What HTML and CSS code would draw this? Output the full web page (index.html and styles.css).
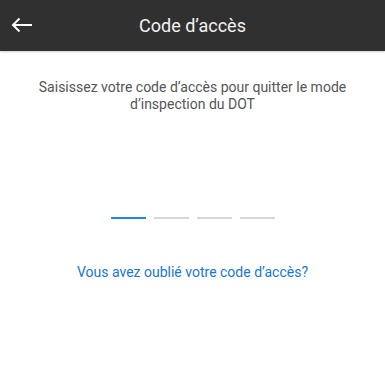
FILE: index.html
```html
<!DOCTYPE html>
<html lang="fr">
<head>
  <meta charset="UTF-8" />
  <meta name="viewport" content="width=device-width, initial-scale=1.0" />
  <title>Code d'accès</title>
  <link rel="stylesheet" href="styles.css">
</head>
<body>
  <header class="toolbar">
    <button class="back-btn" aria-label="Retour">
      <svg width="22" height="16" viewBox="0 0 22 16">
        <path d="M21 8H2M8.5 1.5L2 8l6.5 6.5" fill="none" stroke="#fff" stroke-width="2" />
      </svg>
    </button>
    <h1>Code d’accès</h1>
  </header>

  <main class="content">
    <p class="prompt">Saisissez votre code d’accès pour quitter le mode d’inspection du DOT</p>

    <div class="pin">
      <span class="pin-slot active"></span>
      <span class="pin-slot"></span>
      <span class="pin-slot"></span>
      <span class="pin-slot"></span>
    </div>

    <a class="forgot" href="#">Vous avez oublié votre code d’accès?</a>
  </main>
</body>
</html>
```

FILE: styles.css
```css
body {
  margin: 0;
  font-family: Roboto, "Liberation Sans", sans-serif;
  background: #fff;
  color: #555;
}

.toolbar {
  height: 51px;
  background: #303030;
  display: flex;
  align-items: center;
  justify-content: center;
  position: relative;
  box-shadow: 0 1px 2px rgba(0, 0, 0, 0.2);
}

.toolbar h1 {
  margin: 0;
  font-size: 18px;
  font-weight: 400;
  color: #f2f2f2;
}

.back-btn {
  position: absolute;
  left: 6px;
  top: 10px;
  width: 32px;
  height: 30px;
  padding: 0;
  border: none;
  background: none;
  display: flex;
  align-items: center;
  justify-content: center;
}

.content {
  display: flex;
  flex-direction: column;
  align-items: center;
  padding: 28px 20px 0;
}

.prompt {
  margin: 0;
  font-size: 14px;
  line-height: 17px;
  text-align: center;
  color: #555;
}

.pin {
  display: flex;
  gap: 8px;
  margin-top: 104px;
}

.pin-slot {
  width: 35px;
  height: 2px;
  background: #d6d6d6;
}

.pin-slot.active {
  background: #1e88e5;
}

.forgot {
  margin-top: 45px;
  font-size: 14px;
  color: #1976d2;
  text-decoration: none;
}
```
